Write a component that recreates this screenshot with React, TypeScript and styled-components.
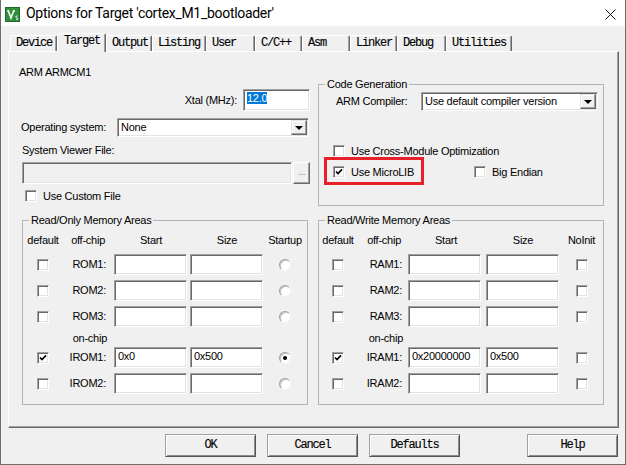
import React from "react";
import styled, { createGlobalStyle } from "styled-components";

const GlobalStyle = createGlobalStyle`
  html, body {
    margin: 0;
    padding: 0;
    background: #f0f0f0;
  }
  body {
    font-family: "Liberation Sans", Arial, sans-serif;
    font-size: 11px;
    letter-spacing: -0.25px;
    color: #000;
  }
`;

const Window = styled.div`
  width: 626px;
  height: 465px;
  box-sizing: border-box;
  border: 1px solid #6e6e6e;
  border-top: none;
  background: #f0f0f0;
  display: flex;
  flex-direction: column;
  overflow: hidden;
`;

const TitleBar = styled.div`
  height: 26px;
  flex-shrink: 0;
  background: #fff;
  display: flex;
  align-items: center;
  padding: 2px 9px 0 4px;
  box-sizing: border-box;
`;

const TitleText = styled.div`
  flex: 1;
  margin-left: 6px;
  margin-top: -2px;
  font-family: Roboto, "Noto Sans", sans-serif;
  font-size: 14px;
  letter-spacing: -0.3px;
  line-height: 18px;
  color: #000;
  white-space: nowrap;
`;

const TabStrip = styled.div`
  height: 18px;
  margin-top: 7px;
  padding-left: 9px;
  display: flex;
  align-items: flex-end;
  flex-shrink: 0;
`;

const monoFont = `
  font-family: "Liberation Mono", "Courier New", monospace;
  font-size: 12px;
  letter-spacing: -1.2px;
  -webkit-text-stroke: 0.12px #000;
`;

const Tab = styled.div<{ $w: number; $active?: boolean }>`
  width: ${(p) => p.$w}px;
  height: ${(p) => (p.$active ? 19 : 16)}px;
  margin-bottom: ${(p) => (p.$active ? -1 : 0)}px;
  box-sizing: border-box;
  position: relative;
  z-index: ${(p) => (p.$active ? 2 : 1)};
  background: #f0f0f0;
  border-top: 1px solid #fff;
  border-left: 1px solid #fff;
  border-right: 1px solid #696969;
  box-shadow: inset -1px 0 0 #a0a0a0;
  border-radius: 2px 2px 0 0;
  padding-left: ${(p) => (p.$active ? 6 : 5)}px;
  ${monoFont}
  line-height: 15px;
  white-space: nowrap;
`;

const Panel = styled.div`
  margin-left: 7px;
  width: 611px;
  height: 377px;
  flex-shrink: 0;
  box-sizing: border-box;
  border-top: 1px solid #fff;
  border-left: 1px solid #fff;
  border-right: 1px solid #696969;
  border-bottom: 1px solid #696969;
  box-shadow: inset -1px -1px 0 #a0a0a0;
  padding: 14px 0 0 10px;
`;

const TopSection = styled.div`
  display: flex;
  align-items: flex-start;
`;

const LeftColumn = styled.div`
  width: 291px;
  display: flex;
  flex-direction: column;
`;

const Line = styled.div<{ $mt?: number; $pl?: number }>`
  margin-top: ${(p) => p.$mt ?? 0}px;
  padding-left: ${(p) => p.$pl ?? 0}px;
  line-height: 13px;
  height: 13px;
  white-space: nowrap;
`;

const FieldRow = styled.div<{ $mt?: number; $pl?: number; $end?: boolean }>`
  display: flex;
  align-items: center;
  justify-content: ${(p) => (p.$end ? "flex-end" : "flex-start")};
  margin-top: ${(p) => p.$mt ?? 0}px;
  padding-left: ${(p) => p.$pl ?? 0}px;
  white-space: nowrap;
`;

const FieldLabel = styled.span<{ $w?: number }>`
  line-height: 13px;
  ${(p) => (p.$w ? `width: ${p.$w}px; flex-shrink: 0;` : "")}
`;

const sunken = `
  box-sizing: border-box;
  border: 1px solid;
  border-color: #a0a0a0 #fff #fff #a0a0a0;
  box-shadow: inset 1px 1px 0 #696969, inset -1px -1px 0 #e3e3e3;
`;

const TextBox = styled.div<{ $w: number; $h?: number; $disabled?: boolean; $ml?: number }>`
  ${sunken}
  width: ${(p) => p.$w}px;
  height: ${(p) => p.$h ?? 21}px;
  margin-left: ${(p) => p.$ml ?? 0}px;
  flex-shrink: 0;
  background: ${(p) => (p.$disabled ? "#f0f0f0" : "#fff")};
  padding: 2px 0 0 3px;
  line-height: 13px;
  white-space: nowrap;
  overflow: hidden;
`;

const Selected = styled.span`
  background: #0078d7;
  color: #fff;
`;

const Combo = styled.div<{ $w: number }>`
  ${sunken}
  width: ${(p) => p.$w}px;
  height: 19px;
  flex-shrink: 0;
  background: #fff;
  display: flex;
  align-items: center;
`;

const ComboText = styled.span`
  flex: 1;
  padding-left: 3px;
  line-height: 13px;
  white-space: nowrap;
`;

const ComboArrow = styled.span`
  width: 16px;
  height: 15px;
  margin-right: 1px;
  box-sizing: border-box;
  background: #f0f0f0;
  border: 1px solid;
  border-color: #e3e3e3 #696969 #696969 #e3e3e3;
  box-shadow: inset -1px -1px 0 #a0a0a0, inset 1px 1px 0 #fff;
  display: flex;
  align-items: center;
  justify-content: center;
  &::after {
    content: "";
    border-left: 4px solid transparent;
    border-right: 4px solid transparent;
    border-top: 4px solid #000;
    margin-top: 1px;
  }
`;

const BrowseButton = styled.div`
  width: 17px;
  height: 22px;
  margin-left: 1px;
  box-sizing: border-box;
  border: 1px solid;
  border-color: #fff #696969 #696969 #fff;
  box-shadow: inset -1px -1px 0 #a0a0a0;
  background: #f0f0f0;
  color: #8a8a8a;
  font-size: 10px;
  line-height: 18px;
  text-align: center;
`;

const CheckBox = styled.span`
  width: 12px;
  height: 12px;
  flex-shrink: 0;
  box-sizing: border-box;
  background: #fff;
  border: 1px solid;
  border-color: #a0a0a0 #fff #fff #a0a0a0;
  box-shadow: inset 1px 1px 0 #696969, inset -1px -1px 0 #e3e3e3;
  display: flex;
  align-items: center;
  justify-content: center;
`;

const CheckItem = styled.div<{ $w?: number }>`
  display: flex;
  align-items: center;
  gap: 6px;
  height: 12px;
  position: relative;
  ${(p) => (p.$w ? `width: ${p.$w}px; flex-shrink: 0;` : "")}
`;

const CheckText = styled.span`
  line-height: 13px;
  white-space: nowrap;
`;

const Highlight = styled.span`
  position: absolute;
  left: -9px;
  top: -9px;
  width: 100px;
  height: 28px;
  box-sizing: border-box;
  border: 3px solid #e8202a;
  pointer-events: none;
`;

const RadioDot = styled.span<{ $on?: boolean }>`
  width: 12px;
  height: 12px;
  box-sizing: border-box;
  border-radius: 50%;
  background: #fff;
  border: 1px solid;
  border-color: #a0a0a0 #f4f4f4 #f4f4f4 #a0a0a0;
  box-shadow: inset 1px 1px 0 #c4c4c4;
  display: flex;
  align-items: center;
  justify-content: center;
  &::after {
    content: "";
    width: 4px;
    height: 4px;
    border-radius: 50%;
    background: ${(p) => (p.$on ? "#000" : "transparent")};
  }
`;

const RightColumn = styled.div`
  margin-left: 8px;
  margin-top: 12px;
`;

const GroupBox = styled.fieldset<{ $w: number; $pb: number }>`
  width: ${(p) => p.$w}px;
  box-sizing: border-box;
  margin: 0;
  padding: 0 0 ${(p) => p.$pb}px 0;
  min-inline-size: 0;
  border: 1px solid #b4b4b4;
`;

const GroupLegend = styled.legend`
  margin-left: 6px;
  padding: 0 2px;
  line-height: 13px;
  font-size: 11px;
`;

const BottomSection = styled.div`
  display: flex;
  gap: 10px;
  margin-top: 8px;
  padding-left: 3px;
`;

const MemBody = styled.div`
  display: flex;
  flex-direction: column;
  gap: 5px;
  padding-top: 5px;
`;

const MemRow = styled.div<{ $cols: string; $h: number }>`
  display: grid;
  grid-template-columns: ${(p) => p.$cols};
  height: ${(p) => p.$h}px;
  align-items: center;
`;

const HeadRow = styled(MemRow)`
  align-items: start;
  line-height: 13px;
`;

const Cell = styled.div<{ $align?: "start" | "center" | "end"; $pr?: number; $pl?: number }>`
  display: flex;
  justify-content: ${(p) => (p.$align === "end" ? "flex-end" : p.$align === "start" ? "flex-start" : "center")};
  padding-right: ${(p) => p.$pr ?? 0}px;
  padding-left: ${(p) => p.$pl ?? 0}px;
  line-height: 13px;
  white-space: nowrap;
  align-self: ${(p) => (p.$align === "start" ? "start" : "center")};
`;

const ButtonBar = styled.div`
  display: flex;
  margin-top: 6px;
  padding-left: 164px;
`;

const DlgButton = styled.div<{ $ml?: number }>`
  width: 91px;
  height: 23px;
  margin-left: ${(p) => p.$ml ?? 0}px;
  box-sizing: border-box;
  background: #f0f0f0;
  border: 1px solid;
  border-color: #a0a0a0 #555 #555 #a0a0a0;
  box-shadow: inset 1px 1px 0 #fff, inset -1px -1px 0 #8c8c8c;
  ${monoFont}
  line-height: 21px;
  text-align: center;
`;

const Check = () => (
  <svg width="8" height="8" viewBox="0 0 8 8">
    <polyline points="1,3.5 3,5.6 7,1.3" fill="none" stroke="#000" strokeWidth="1.7" />
  </svg>
);

const Box = ({ on }: { on?: boolean }) => <CheckBox>{on && <Check />}</CheckBox>;

const KeilIcon = () => (
  <svg width="15" height="15" viewBox="0 0 15 15">
    <rect x="0" y="0" width="15" height="15" fill="#2f8f3b" />
    <rect x="0.5" y="0.5" width="14" height="14" fill="none" stroke="#1d6b27" />
    <path d="M3 3 L6 11 L9 3" fill="none" stroke="#fff" strokeWidth="1.6" />
    <path d="M2 4 L4 4 M8 4 L10 4" stroke="#fff" strokeWidth="1" />
    <path d="M12.5 9 C10.5 8.5 10.5 10.5 12 11 C13.5 11.5 13 13 11 12.5" fill="none" stroke="#fff" strokeWidth="1" />
  </svg>
);

const CloseIcon = () => (
  <svg width="11" height="11" viewBox="0 0 11 11">
    <path d="M0.5 0.5 L10.5 10.5 M10.5 0.5 L0.5 10.5" stroke="#111" strokeWidth="1" />
  </svg>
);

type MemDef = { name: string; start?: string; size?: string; def?: boolean; last?: boolean };

const roRows: MemDef[] = [
  { name: "ROM1:" },
  { name: "ROM2:" },
  { name: "ROM3:" },
  { name: "IROM1:", start: "0x0", size: "0x500", def: true, last: true },
  { name: "IROM2:" },
];

const rwRows: MemDef[] = [
  { name: "RAM1:" },
  { name: "RAM2:" },
  { name: "RAM3:" },
  { name: "IRAM1:", start: "0x20000000", size: "0x500", def: true },
  { name: "IRAM2:" },
];

type MemSpec = {
  legend: string;
  lastHead: string;
  cols: string;
  startMl: number;
  sizeMl: number;
  lastKind: "radio" | "check";
  rows: MemDef[];
};

const MemoryArea = ({ spec }: { spec: MemSpec }) => {
  const renderRow = (r: MemDef) => (
    <MemRow key={r.name} $cols={spec.cols} $h={21}>
      <Cell>
        <Box on={r.def} />
      </Cell>
      <Cell $align="end" $pr={4}>
        {r.name}
      </Cell>
      <Cell $align="start" $pl={spec.startMl}>
        <TextBox $w={73}>{r.start}</TextBox>
      </Cell>
      <Cell $align="start" $pl={spec.sizeMl}>
        <TextBox $w={73}>{r.size}</TextBox>
      </Cell>
      <Cell>{spec.lastKind === "radio" ? <RadioDot $on={r.last} /> : <Box on={r.last} />}</Cell>
    </MemRow>
  );

  return (
    <GroupBox $w={286} $pb={10}>
      <GroupLegend>{spec.legend}</GroupLegend>
      <MemBody>
        <HeadRow $cols={spec.cols} $h={17}>
          <Cell>default</Cell>
          <Cell $align="end" $pr={5}>
            off-chip
          </Cell>
          <Cell $pl={spec.startMl}>Start</Cell>
          <Cell $pl={spec.sizeMl}>Size</Cell>
          <Cell>{spec.lastHead}</Cell>
        </HeadRow>
        {spec.rows.slice(0, 3).map(renderRow)}
        <MemRow $cols={spec.cols} $h={10}>
          <Cell />
          <Cell $align="end" $pr={3}>
            on-chip
          </Cell>
        </MemRow>
        {spec.rows.slice(3).map(renderRow)}
      </MemBody>
    </GroupBox>
  );
};

const tabs: { label: string; w: number; active?: boolean }[] = [
  { label: "Device", w: 47 },
  { label: "Target", w: 49, active: true },
  { label: "Output", w: 46 },
  { label: "Listing", w: 54 },
  { label: "User", w: 49 },
  { label: "C/C++", w: 47 },
  { label: "Asm", w: 48 },
  { label: "Linker", w: 47 },
  { label: "Debug", w: 49 },
  { label: "Utilities", w: 66 },
];

export default function App() {
  return (
    <>
      <GlobalStyle />
      <Window>
        <TitleBar>
          <KeilIcon />
          <TitleText>Options for Target 'cortex_M1_bootloader'</TitleText>
          <CloseIcon />
        </TitleBar>

        <TabStrip>
          {tabs.map((t) => (
            <Tab key={t.label} $w={t.w} $active={t.active}>
              {t.label}
            </Tab>
          ))}
        </TabStrip>

        <Panel>
          <TopSection>
            <LeftColumn>
              <Line>ARM ARMCM1</Line>
              <FieldRow $mt={10} $end>
                <FieldLabel>Xtal (MHz):</FieldLabel>
                <TextBox $w={67} $h={22} $ml={6}>
                  <Selected>12.0</Selected>
                </TextBox>
              </FieldRow>
              <FieldRow $mt={7} $pl={2}>
                <FieldLabel $w={96}>Operating system:</FieldLabel>
                <Combo $w={192}>
                  <ComboText>None</ComboText>
                  <ComboArrow />
                </Combo>
              </FieldRow>
              <Line $mt={7} $pl={3}>
                System Viewer File:
              </Line>
              <FieldRow $mt={5} $pl={3}>
                <TextBox $w={270} $h={22} $disabled />
                <BrowseButton>...</BrowseButton>
              </FieldRow>
              <FieldRow $mt={6} $pl={6}>
                <CheckItem>
                  <Box />
                  <CheckText>Use Custom File</CheckText>
                </CheckItem>
              </FieldRow>
            </LeftColumn>

            <RightColumn>
              <GroupBox $w={286} $pb={27}>
                <GroupLegend>Code Generation</GroupLegend>
                <FieldRow $mt={1} $pl={17}>
                  <FieldLabel $w={85}>ARM Compiler:</FieldLabel>
                  <Combo $w={177}>
                    <ComboText>Use default compiler version</ComboText>
                    <ComboArrow />
                  </Combo>
                </FieldRow>
                <FieldRow $mt={34} $pl={14}>
                  <CheckItem>
                    <Box />
                    <CheckText>Use Cross-Module Optimization</CheckText>
                  </CheckItem>
                </FieldRow>
                <FieldRow $mt={9} $pl={14}>
                  <CheckItem $w={141}>
                    <Highlight />
                    <Box on />
                    <CheckText>Use MicroLIB</CheckText>
                  </CheckItem>
                  <CheckItem>
                    <Box />
                    <CheckText>Big Endian</CheckText>
                  </CheckItem>
                </FieldRow>
              </GroupBox>
            </RightColumn>
          </TopSection>

          <BottomSection>
            <MemoryArea
              spec={{
                legend: "Read/Only Memory Areas",
                lastHead: "Startup",
                cols: "40px 47px 78px 76px 42px",
                startMl: 4,
                sizeMl: 2,
                lastKind: "radio",
                rows: roRows,
              }}
            />
            <MemoryArea
              spec={{
                legend: "Read/Write Memory Areas",
                lastHead: "NoInit",
                cols: "38px 49px 78px 76px 43px",
                startMl: 2,
                sizeMl: 2,
                lastKind: "check",
                rows: rwRows,
              }}
            />
          </BottomSection>
        </Panel>

        <ButtonBar>
          <DlgButton>OK</DlgButton>
          <DlgButton $ml={11}>Cancel</DlgButton>
          <DlgButton $ml={11}>Defaults</DlgButton>
          <DlgButton $ml={67}>Help</DlgButton>
        </ButtonBar>
      </Window>
    </>
  );
}
